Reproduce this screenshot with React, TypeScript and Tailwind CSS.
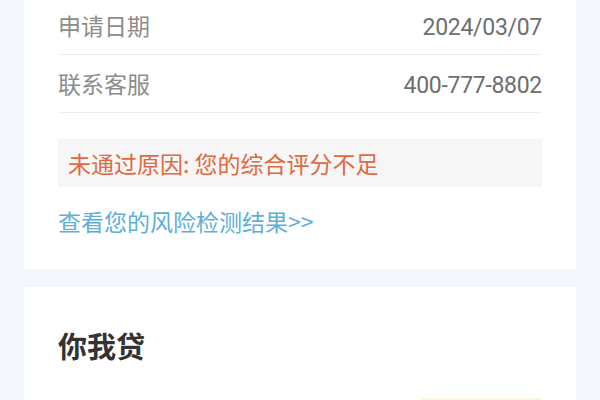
export default function App() {
  const rows = [
    { label: '申请日期', value: '2024/03/07' },
    { label: '联系客服', value: '400-777-8802' },
  ]

  return (
    <div
      className="w-[600px] h-[400px] overflow-hidden bg-[#f3f6fc] px-[24px]"
      style={{ fontFamily: '"Noto Sans CJK SC", "Noto Sans", sans-serif' }}
    >
      {/* Application info card */}
      <div className="bg-white px-[34px] pb-[34px] -mt-[3px]">
        {rows.map(r => (
          <div key={r.label} className="flex items-baseline justify-between pt-[14px] pb-[12px] border-b border-[#ededed]">
            <span className="text-[23px] leading-[28px] text-[#8c8c8c]">{r.label}</span>
            <span className="text-[23px] leading-[28px] text-[#6e6e6e] tracking-[-0.3px]" style={{ fontFamily: 'Roboto, "Noto Sans", sans-serif' }}>
              {r.value}
            </span>
          </div>
        ))}
        <div className="mt-[26px] h-[48px] bg-[#f6f6f6] flex items-center px-[10px]">
          <span className="text-[23px] leading-[28px] text-[#e0693f]">未通过原因: 您的综合评分不足</span>
        </div>
        <div className="mt-[20px] text-[23px] leading-[28px] text-[#5cafd9]">查看您的风险检测结果&gt;&gt;</div>
      </div>

      {/* Loan product card */}
      <div className="bg-white mt-[18px] px-[34px] pt-[41px]">
        <div className="text-[29px] leading-[34px] font-bold text-[#333333]">你我贷</div>
        <div className="mt-[36px] flex items-center justify-between">
          <span className="text-[23px] leading-[28px] text-[#8c8c8c]">借款额度</span>
          <span className="text-[23px] leading-[28px] text-[#6e6e6e]">最高20万</span>
          <span className="px-[14px] text-[23px] leading-[28px] text-[#c9a24a] bg-[#fdf6dc]">立即申请</span>
        </div>
      </div>
    </div>
  )
}
